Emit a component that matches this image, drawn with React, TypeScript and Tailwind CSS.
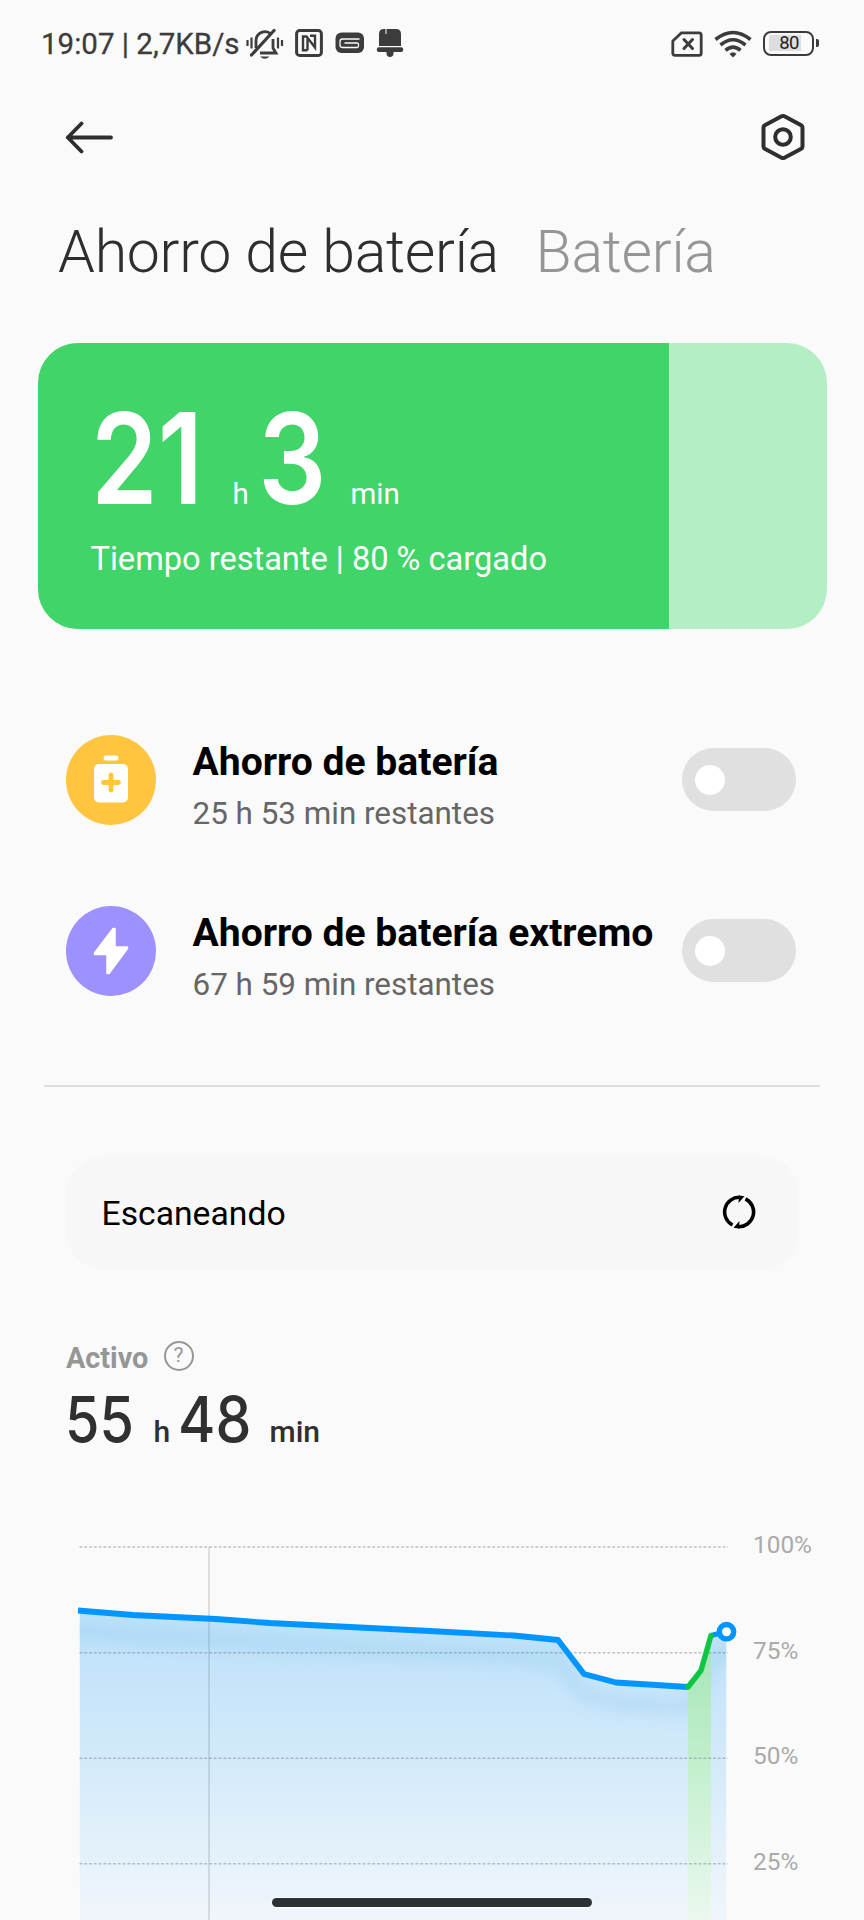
import React from "react";

const points: [number, number][] = [
  [78, 90.5], [133, 95], [216, 99], [270, 103], [350, 107], [430, 111], [514, 115.5], [558, 120],
  [584, 154], [616, 162.5], [688, 167],
];
const charge: [number, number][] = [[688, 167], [701, 150.5], [711, 115.5]];
const toPath = (p: [number, number][]) => p.map(([x, y], i) => `${i ? "L" : "M"}${x} ${y}`).join(" ");

function Digits({ value, box, type }: { value: string; box: string; type: string }) {
  return (
    <span className={`block shrink-0 ${box}`}>
      <span className={`block w-max origin-left font-['Inter',sans-serif] whitespace-pre ${type}`}>{value}</span>
    </span>
  );
}

function StatusBar() {
  return (
    <header className="flex h-[86px] items-center pl-[41px] pr-[45px] text-[#3c3c3c]">
      <span className="w-[204.500px] whitespace-nowrap pt-[3px] text-[29.5px] leading-none [-webkit-text-stroke:0.3px_#3c3c3c]">19:07 | 2,7KB/s</span>
      <svg className="mt-[1px] h-[32px] w-[38px]" viewBox="0 0 38 32" fill="none" stroke="currentColor" strokeWidth="2.8">
        <path d="M10 20v-8a9 9 0 0 1 15-6M27 11v9l3 5H14" />
        <path d="M5.5 27 28 2.500" strokeLinecap="round" strokeWidth="3.200" />
        <path d="M14 28.500h9.500q-4.700 4.500-9.500 0Z" fill="currentColor" stroke="none" />
        <path d="M1.500 12v6M5.500 9.500v11M32 9.500v11M36 12v6" strokeWidth="2.200" />
      </svg>
      <svg className="ml-[11px] h-[28px] w-[28px]" viewBox="0 0 28 28" fill="none" stroke="currentColor">
        <rect x="1.600" y="1.600" width="24.800" height="24.800" rx="3" strokeWidth="3" />
        <path d="M12.500 21.300H8V7.500h3.500L20 18.500V6.800h-5M12.500 10v11.300" strokeWidth="2.400" />
      </svg>
      <svg className="ml-[12px] h-[22px] w-[30px]" viewBox="0 0 30 22" fill="none">
        <rect x="0.500" y="0.500" width="28.500" height="20.500" rx="6" fill="currentColor" />
        <path d="M24.500 7H7.500Q5 7 5 9.500v3.500q0 2.500 2.500 2.500H22q1.500 0 1.500-1.500v-1.500q0-1.500-1.500-1.500H9.500" stroke="#fafafa" strokeWidth="1.300" />
      </svg>
      <svg className="ml-[11px] h-[30px] w-[28px]" viewBox="0 0 28 30" fill="currentColor">
        <path d="M3 18V6q0-5 5-5h1.500v5h1V1h9.500q5 0 5 5v12Z" />
        <rect x="0.800" y="19.300" width="26.400" height="4.700" rx="2" />
        <path d="M10.500 24h7v1.500a3.500 3.500 0 0 1-7 0Z" />
      </svg>
      <div className="grow" />
      <svg className="mt-[2px] h-[26px] w-[32px]" viewBox="0 0 32 26" fill="none" stroke="currentColor" strokeWidth="2.800">
        <path d="M10.500 1.800H28q2.200 0 2.200 2.200v18.200q0 2.200-2.200 2.200H4q-2.200 0-2.200-2.200V10Z" strokeLinejoin="round" />
        <path d="m13 8.500 8.500 9m0-9-8.500 9" strokeLinecap="round" strokeWidth="3" />
      </svg>
      <svg className="ml-[10.500px] mt-[1px] h-[28px] w-[38px]" viewBox="0 0 38 28" fill="none" stroke="currentColor" strokeWidth="3.600">
        <path d="M1.500 9.500q17.500-14 35 0M6.500 15q12.500-10.500 25 0M11.500 20.300q7.500-6.500 15 0" />
        <path d="M15.500 24q3.500-3.500 7 0L19 27.500Z" fill="currentColor" stroke="none" />
      </svg>
      <div className="ml-[11.500px] flex h-[25px] w-[51px] items-center rounded-[8px] border-[2px] border-[#3c3c3c] p-[4px]">
        <div className="flex h-[16px] w-[32px] items-center justify-end bg-[#dedede] pr-[2px]">
          <span className="pt-[1px] text-[18.500px] leading-none tracking-[-0.5px] text-[#222]">80</span>
        </div>
      </div>
      <div className="ml-[2px] h-[8px] w-[3px] rounded-r-[2px] bg-[#3c3c3c]" />
    </header>
  );
}

function Mode({ icon, title, detail }: { icon: React.ReactNode; title: string; detail: string }) {
  return (
    <div className="flex h-[90px] items-center">
      {icon}
      <div className="ml-[37px] grow whitespace-nowrap pt-[10px]">
        <div className="text-[39.100px] font-bold leading-[46px] text-black">{title}</div>
        <div className="mt-[11px] text-[31.400px] leading-[36px] text-[#666]">{detail}</div>
      </div>
      <button className="mb-[1px] flex h-[63px] w-[114px] items-center rounded-full bg-[#e0e0e0] pl-[13px]">
        <span className="size-[30px] rounded-full bg-white" />
      </button>
    </div>
  );
}

export default function App() {
  return (
    <div className="relative flex h-[1920px] w-[864px] flex-col overflow-hidden bg-[#fafafa] font-['Roboto',sans-serif]">
      <StatusBar />
      <nav className="flex h-[102px] items-center justify-between pl-[65px] pr-[58px] text-[#2e2e2e]">
        <svg className="h-[34px] w-[49px]" viewBox="0 0 49 34" fill="none" stroke="currentColor" strokeWidth="3.800" strokeLinecap="round" strokeLinejoin="round">
          <path d="M46 17.500H2.800M16.500 3.500 2.800 17.500 16.500 31.500" />
        </svg>
        <svg className="h-[48px] w-[46px]" viewBox="0 0 46 48" fill="none" stroke="currentColor" strokeWidth="4">
          <path d="M21.500 3.300 4.800 12.300Q3.500 13 3.500 14.500v19q0 1.500 1.300 2.200l16.700 9q1.500.7 3 0l16.700-9q1.300-.7 1.300-2.200v-19q0-1.500-1.300-2.200L24.500 3.300q-1.500-.7-3 0Z" />
          <circle cx="23" cy="24" r="7.800" />
        </svg>
      </nav>
      <div className="mt-[29px] flex h-[70px] items-center whitespace-nowrap pl-[58px] text-[59px] font-light leading-[70px] tracking-[-0.250px]">
        <h1 className="w-[477.500px] text-[#2e2e2e]">Ahorro de batería</h1>
        <span className="text-[#969696]">Batería</span>
      </div>

      <section className="mx-[37.500px] mt-[56px] h-[286px] shrink-0 overflow-hidden rounded-[40px] bg-[#b3eec4]">
        <div className="h-full w-[631px] bg-[#40d469] pl-[53px] pt-[52px] text-white">
          <div className="flex h-[127px] items-baseline text-[29.500px]">
            <Digits value="21" box="w-[142px]" type="text-[126px] font-semibold leading-[127px] scale-x-[0.850]" />
            <span className="w-[27px]">h</span>
            <Digits value="3" box="w-[91px] -indent-[2px]" type="text-[126px] font-semibold leading-[127px] scale-x-[0.85]" />
            <span>min</span>
          </div>
          <p className="mt-[17px] text-[32.600px] leading-[40px]">Tiempo restante | 80 % cargado</p>
        </div>
      </section>

      <section className="mt-[106px] flex flex-col gap-[81px] pl-[65.500px] pr-[68px]">
        <Mode
          title="Ahorro de batería"
          detail="25 h 53 min restantes"
          icon={
            <svg className="size-[90px]" viewBox="0 0 90 90">
              <circle cx="45" cy="45" r="45" fill="#ffc53f" />
              <rect x="37.500" y="20.500" width="15" height="5" rx="2.500" fill="#fff" />
              <rect x="28" y="29" width="34" height="38.500" rx="5" fill="#fff" />
              <path d="M45 40v15M37.500 47.500h15" stroke="#ffc53f" strokeWidth="4.800" strokeLinecap="round" />
            </svg>
          }
        />
        <Mode
          title="Ahorro de batería extremo"
          detail="67 h 59 min restantes"
          icon={
            <svg className="size-[90px]" viewBox="0 0 90 90">
              <circle cx="45" cy="45" r="45" fill="#9d90ff" />
              <path d="M47 22.500 28.500 47v1.500H41V67.500h2L61.500 42.500V41H49V22.500Z" fill="#fff" stroke="#fff" strokeWidth="1.500" strokeLinejoin="round" />
            </svg>
          }
        />
      </section>

      <div className="mx-[44px] mt-[89px] h-[1.500px] shrink-0 bg-[#dedede]" />

      <button className="ml-[65.500px] mt-[69px] flex h-[114px] w-[733px] shrink-0 items-center justify-between rounded-[38px] bg-[#f7f7f7] pl-[36px] pr-[42.500px] text-[33.700px] text-black">
        <span className="pt-[4px]">Escaneando</span>
        <svg className="mb-[1px] size-[34px]" viewBox="0 0 34 34" fill="none" stroke="currentColor" strokeWidth="3.600">
          <path d="M10.500 30A14.700 14.700 0 0 1 18 2.300M23.500 3.900A14.700 14.700 0 0 1 16 31.700" />
          <path d="M17 .6 22.500 1.200 16.500 8ZM17 33.400 11.500 32.800 17.500 26Z" fill="currentColor" stroke="none" />
        </svg>
      </button>

      <div className="mt-[69px] flex h-[34px] items-center pl-[66px] text-[#969696]">
        <span className="w-[97.500px] pt-[5px] text-[28.800px] font-bold leading-[34px]">Activo</span>
        <span className="flex size-[30px] items-center justify-center rounded-full border-2 border-[#969696] text-[21px] leading-none">?</span>
      </div>
      <div className="mt-[8px] flex h-[76px] items-baseline pl-[66px] text-[30px] font-medium text-[#303030]">
        <Digits value="55" box="w-[87.500px] -indent-[1px]" type="text-[63px] font-medium leading-[76px] scale-x-[0.885]" />
        <span className="w-[25.500px]">h</span>
        <Digits value="48" box="w-[90.500px] -indent-[1px]" type="text-[63px] font-medium leading-[76px] scale-x-[0.905]" />
        <span>min</span>
      </div>

      <section className="mt-auto flex h-[400px] shrink-0">
        <svg className="h-[400px] w-[742px]" viewBox="0 0 742 400" fill="none">
          <defs>
            <linearGradient id="blue" x1="0" y1="90" x2="0" y2="425" gradientUnits="userSpaceOnUse">
              <stop offset="0" stopColor="#bbe0f9" />
              <stop offset="0.450" stopColor="#d3eafa" />
              <stop offset="1" stopColor="#f5f8fb" />
            </linearGradient>
            <linearGradient id="green" x1="0" y1="115" x2="0" y2="425" gradientUnits="userSpaceOnUse">
              <stop offset="0" stopColor="#a3e4b4" />
              <stop offset="0.450" stopColor="#c5f0d0" />
              <stop offset="1" stopColor="#f1f9f3" />
            </linearGradient>
            <filter id="soft" x="-10%" y="-50%" width="120%" height="200%">
              <feGaussianBlur stdDeviation="7" />
            </filter>
            <clipPath id="area">
              <path d={`${toPath([[79.5, 90.5], ...points.slice(1), ...charge.slice(1), [726.5, 112]])} V400 H79.500Z`} />
            </clipPath>
          </defs>
          <g clipPath="url(#area)">
            <path d="M79.500 80H688V400H79.500ZM711 80H726.500V400H711Z" fill="url(#blue)" />
            <path d={toPath([[60, 89], ...points, ...charge.slice(1), [740, 111]])} transform="translate(0 21)" stroke="#5eb4e8" strokeOpacity="0.170" strokeWidth="16" filter="url(#soft)" />
            <path d="M688 80H711V400H688Z" fill="url(#green)" />
          </g>
          <path d="M79.500 27H728M79.500 132.700H728M79.500 238.300H728M79.500 343.800H728" stroke="#5c7080" strokeOpacity="0.400" strokeWidth="1.500" strokeDasharray="2.800 2" />
          <path d="M209 27V400" stroke="#607080" strokeOpacity="0.220" strokeWidth="1.800" />
          <path d={toPath(points)} stroke="#0095ff" strokeWidth="5.800" strokeLinejoin="round" />
          <path d="M711 115.500 727 111.500" stroke="#0095ff" strokeWidth="5" />
          <path d={toPath(charge)} stroke="#0cc644" strokeWidth="5.400" strokeLinejoin="round" strokeLinecap="round" />
          <circle cx="726.500" cy="111.700" r="7.200" fill="#fff" stroke="#0095ff" strokeWidth="5.400" />
        </svg>
        <div className="flex flex-col gap-[75.600px] pl-[11px] pt-[10px] text-[24.400px] leading-[30px] text-[#aaa]">
          <span>100%</span>
          <span>75%</span>
          <span>50%</span>
          <span>25%</span>
        </div>
      </section>
      <div className="absolute left-[272px] top-[1898px] h-[8.500px] w-[320px] rounded-full bg-[#2c3134] ring-1 ring-white/70" />
    </div>
  );
}
